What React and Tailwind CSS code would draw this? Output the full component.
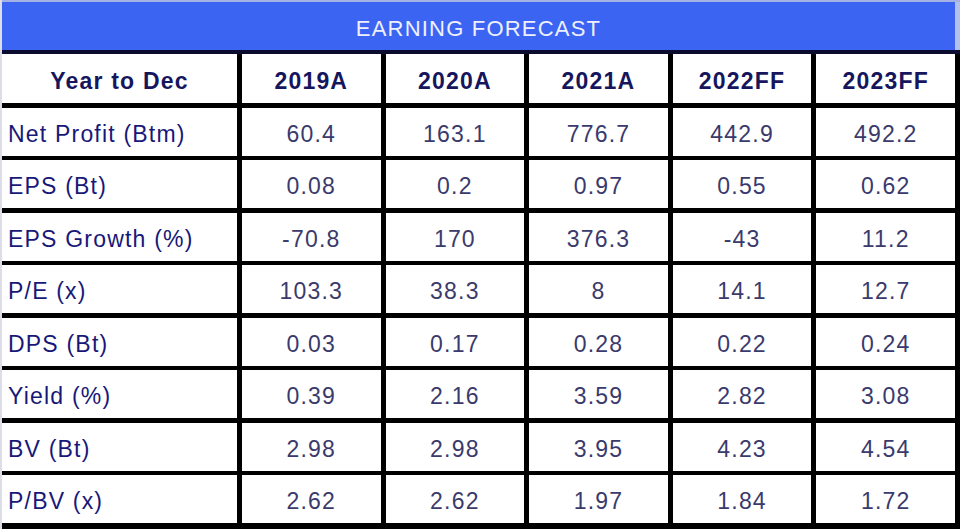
import React from 'react';

const years = ['2019A', '2020A', '2021A', '2022FF', '2023FF'];

const rows = [
  ['Net Profit (Btm)', '60.4', '163.1', '776.7', '442.9', '492.2'],
  ['EPS (Bt)', '0.08', '0.2', '0.97', '0.55', '0.62'],
  ['EPS Growth (%)', '-70.8', '170', '376.3', '-43', '11.2'],
  ['P/E (x)', '103.3', '38.3', '8', '14.1', '12.7'],
  ['DPS (Bt)', '0.03', '0.17', '0.28', '0.22', '0.24'],
  ['Yield (%)', '0.39', '2.16', '3.59', '2.82', '3.08'],
  ['BV (Bt)', '2.98', '2.98', '3.95', '4.23', '4.54'],
  ['P/BV (x)', '2.62', '2.62', '1.97', '1.84', '1.72'],
];

const App = () => {
  return (
    <div className="w-[960px] h-[529px] flex pl-[2px] bg-[#dcdde6] font-['Liberation_Sans',Arial,sans-serif] overflow-hidden">
      <div className="flex-1 flex flex-col">
        {/* Title bar */}
        <div className="h-[2px] bg-[#a3b1e4]" />
        <div className="h-[48px] flex">
          <div className="flex-1 bg-[#3c64f3] flex items-center justify-center pt-[6px] text-[22px] tracking-[1.2px] text-[#eef0ff] leading-none">
            EARNING FORECAST
          </div>
          <div className="w-[5px] bg-[#b3c0ec]" />
        </div>
        <div className="h-[4px] bg-[#0b0b30]" />

        {/* Table */}
        <div className="grid grid-cols-[235px_repeat(5,1fr)] grid-rows-[49px_repeat(8,48px)] gap-x-[5px] gap-y-[4.5px] bg-black pr-[5px] pb-[6px] text-[23px] tracking-[1.2px] leading-none">
          <div className="bg-white flex items-center justify-center pt-[6px] font-bold text-[#16165e]">
            Year to Dec
          </div>
          {years.map((y) => (
            <div
              key={y}
              className="bg-white flex items-center justify-center pt-[6px] font-bold text-[#16165e]"
            >
              {y}
            </div>
          ))}

          {rows.map((row) => (
            <React.Fragment key={row[0]}>
              <div className="bg-white flex items-center pl-[6px] pt-[5px] text-[#181878]">
                {row[0]}
              </div>
              {row.slice(1).map((v, i) => (
                <div
                  key={i}
                  className="bg-white flex items-center justify-center pt-[5px] text-[#3a3a6c]"
                >
                  {v}
                </div>
              ))}
            </React.Fragment>
          ))}
        </div>
      </div>
    </div>
  );
};

export default App;
